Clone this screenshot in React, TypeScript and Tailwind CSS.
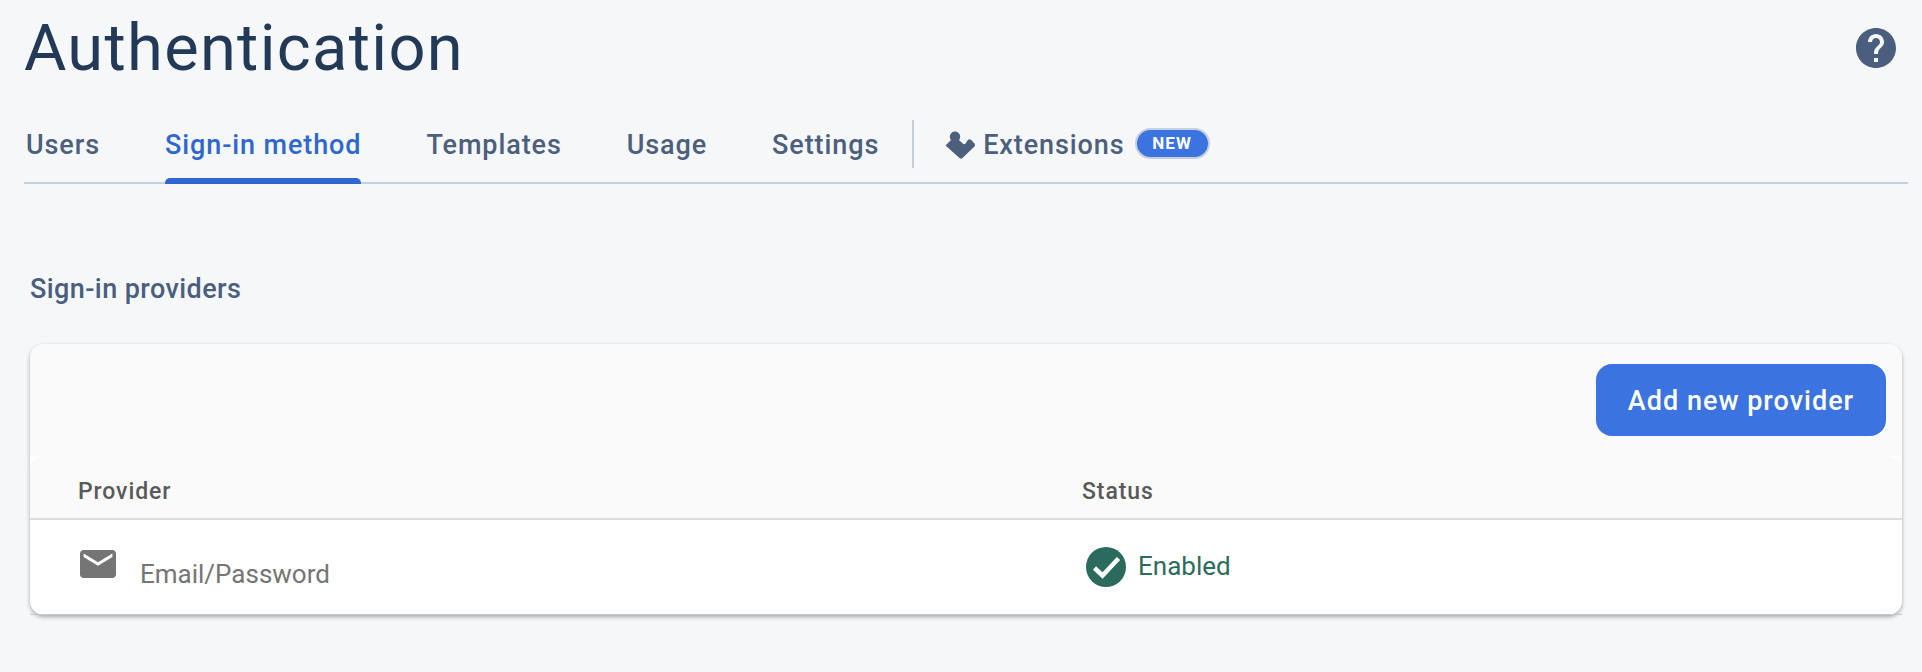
import React from "react";

const tabs = ["Users", "Sign-in method", "Templates", "Usage", "Settings"];

const App = () => {
  return (
    <div className="h-[672px] w-[1922px] overflow-hidden bg-[#f6f7f9] font-['Roboto',sans-serif]">
      <header className="flex h-[102px] items-start justify-between pl-6 pr-[26px]">
        <h1 className="mt-[11px] text-[65px] leading-[75px] font-normal tracking-[1.3px] text-[#223a57]">
          Authentication
        </h1>
        <button aria-label="help" className="mt-7">
          <svg viewBox="2 2 20 20" className="h-10 w-10 fill-[#4a5f80]">
            <path d="M12 2C6.480 2 2 6.480 2 12s4.480 10 10 10 10-4.480 10-10S17.520 2 12 2zm1 17h-2v-2h2v2zm2.070-7.750l-.9.920C13.450 12.900 13 13.500 13 15h-2v-.5c0-1.100.45-2.100 1.170-2.830l1.240-1.260c.37-.36.59-.86.59-1.410 0-1.100-.9-2-2-2s-2 .9-2 2H8c0-2.210 1.790-4 4-4s4 1.790 4 4c0 .88-.36 1.680-.93 2.250z" />
          </svg>
        </button>
      </header>

      <nav className="ml-6 flex h-[82px] w-[1884px] items-stretch border-b-2 border-[#c5d0de] pl-[2px]">
        {tabs.map((tab) => (
          <a
            key={tab}
            className={
              tab === "Sign-in method"
                ? "relative mr-[65px] flex h-[80px] items-center pt-[7px] text-[27px] font-medium tracking-[0.9px] text-[#3067cf]"
                : "relative mr-[65px] flex h-[80px] items-center pt-[7px] text-[27px] font-medium tracking-[0.9px] text-[#4c5f7d]"
            }
          >
            {tab}
            {tab === "Sign-in method" && (
              <span className="absolute inset-x-0 -bottom-[2px] h-[6px] rounded-t-[5px] bg-[#3067cf]" />
            )}
          </a>
        ))}
        <div className="-ml-[32px] mt-[18px] h-12 w-[2px] bg-[#c5d0de]" />
        <div className="ml-[31px] flex h-[80px] items-center pt-[7px]">
          <svg viewBox="0 0 30 28" className="-mt-[2px] h-7 w-[30px] fill-[#4c5f7d]">
            <path d="M0.500 14.500 6 9A5.200 5.200 0 1 1 14 9L18 12.800Q19.300 13.800 20.500 12.500L22.500 9.500Q24 7.500 26 8.800L29.500 12.500Q30.500 14 29.500 15.500L17.500 27Q16 28 14.500 27Z" />
          </svg>
          <span className="ml-2 text-[27px] font-medium tracking-[0.9px] text-[#4c5f7d]">Extensions</span>
          <span className="ml-[10px] -mt-[4px] flex h-[31px] w-[75px] items-center justify-center rounded-full border-2 border-[#c5d0de] bg-[#3b73e0] text-[17px] font-bold tracking-[1px] text-white">
            NEW
          </span>
        </div>
      </nav>

      <h2 className="mt-[91px] ml-[30px] text-[27px] leading-7 font-medium tracking-[0.42px] text-[#4a5f80]">
        Sign-in providers
      </h2>

      <section className="mt-[41px] ml-[30px] h-[271px] w-[1872px] rounded-[14px] bg-white shadow-[0_2px_4px_rgba(0,0,0,0.32)]">
        <div className="flex h-[112px] items-start justify-end rounded-t-[14px] bg-[#fafafa] pt-5 pr-4">
          <button className="h-[72px] w-[290px] rounded-2xl bg-[#3b73e0] pt-[2px] text-[27px] font-medium tracking-[1px] text-white">
            Add new provider
          </button>
        </div>
        <div className="flex h-16 items-end rounded-t-[14px] border-b-2 border-[#dddddd] bg-[#fafafa] pb-[9px] text-[23px] font-medium tracking-[0.9px] text-[#5a5a5a]">
          <span className="ml-[48px] w-[1004px]">Provider</span>
          <span>Status</span>
        </div>
        <div className="flex h-[94px] items-start rounded-b-[14px]">
          <div className="ml-[50px] mt-[30px] flex w-[1006px] items-start">
            <svg viewBox="2 4 20 16" preserveAspectRatio="none" className="h-7 w-9 fill-[#757575]">
              <path d="M20 4H4c-1.100 0-1.990.9-1.990 2L2 18c0 1.100.9 2 2 2h16c1.100 0 2-.9 2-2V6c0-1.100-.9-2-2-2zm0 4l-8 5-8-5V6l8 5 8-5v2z" />
            </svg>
            <span className="ml-[24px] mt-[10px] text-[26px] leading-7 text-[#757575]">Email/Password</span>
          </div>
          <div className="flex h-full items-center">
            <svg viewBox="0 0 40 40" className="h-10 w-10">
              <circle cx="20" cy="20" r="20" fill="#2a6b5d" />
              <path d="M8.500 21 16.500 28.500 32.500 11.500" fill="none" stroke="#fff" strokeWidth="4.500" />
            </svg>
            <span className="ml-3 pb-[2px] text-[26px] text-[#2e6b5e]">Enabled</span>
          </div>
        </div>
        <div className="h-px bg-[#c8c8c8]" />
      </section>
    </div>
  );
};

export default App;
